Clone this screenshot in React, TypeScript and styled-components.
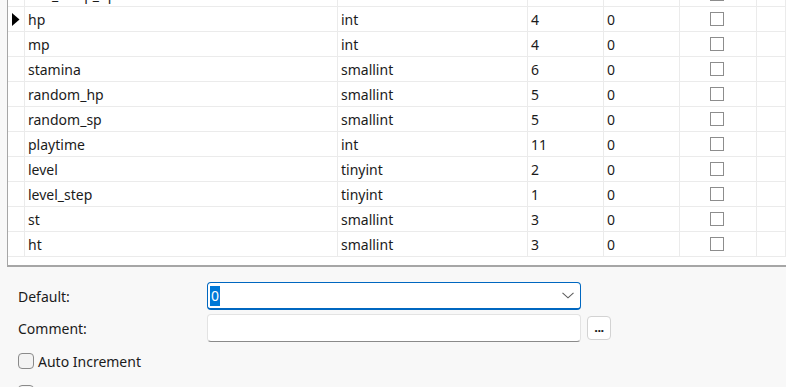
import styled, { createGlobalStyle } from "styled-components";

const GlobalStyle = createGlobalStyle`
	html, body {
		margin: 0;
		padding: 0;
		background: #f8f8f8;
	}
	body {
		font-family: "Noto Sans", "Open Sans", sans-serif;
		font-size: 14px;
		color: #1b1b1b;
	}
`

const Page = styled.div`
	width: 786px;
	height: 387px;
	overflow: hidden;
	background: #f8f8f8;
`

const GridPanel = styled.div`
	margin: -18px 0 0 7px;
	background: #ffffff;
	border-left: 1px solid #a6a6a6;
	border-bottom: 2px solid #a6a6a6;
	padding-bottom: 8px;
`

const Row = styled.div`
	display: grid;
	grid-template-columns: 17px 313px 190px 76px 76px 77px 1fr;
	height: 25px;
	box-sizing: border-box;
	border-bottom: 1px solid #ebebeb;
`

const Cell = styled.div<{ $center?: boolean }>`
	display: flex;
	align-items: center;
	justify-content: ${(p) => (p.$center ? "center" : "flex-start")};
	padding-left: ${(p) => (p.$center ? "0" : "3px")};
	border-right: 1px solid #ebebeb;
	white-space: nowrap;
	overflow: hidden;
	box-sizing: border-box;
`

const GridCheck = styled.span`
	width: 14px;
	height: 14px;
	box-sizing: border-box;
	border: 1px solid #8d8d8d;
	background: #ffffff;
	margin-left: -2px;
`

const FormArea = styled.div`
	padding: 15px 0 0 18px;
`

const FieldRow = styled.div`
	display: grid;
	grid-template-columns: 189px 374px auto;
	align-items: center;
	height: 28px;
	margin-bottom: 4px;
`

const Label = styled.span`
	color: #1b1b1b;
`

const Combo = styled.div`
	display: flex;
	align-items: center;
	justify-content: space-between;
	height: 28px;
	box-sizing: border-box;
	border: 1px solid #0067c0;
	border-bottom-width: 2px;
	border-radius: 4px;
	background: #ffffff;
	padding: 0 4px 0 2px;
`

const Selected = styled.span`
	background: #0078d7;
	color: #ffffff;
	padding: 0 1px;
	line-height: 20px;
`

const TextBox = styled.div`
	height: 28px;
	box-sizing: border-box;
	border: 1px solid #e3e3e3;
	border-bottom-color: #8a8a8a;
	border-radius: 4px;
	background: #ffffff;
`

const DotsButton = styled.button`
	margin-left: 6px;
	width: 24px;
	height: 24px;
	padding: 0 0 2px;
	box-sizing: border-box;
	border: 1px solid #d3d3d3;
	border-radius: 4px;
	background: #ffffff;
	font-family: "Noto Sans", sans-serif;
	font-size: 13px;
	font-weight: 700;
	line-height: 1;
	letter-spacing: -0.5px;
	color: #1b1b1b;
`

const CheckRow = styled.label<{ $first?: boolean }>`
	display: flex;
	align-items: center;
	gap: 4px;
	height: 16px;
	margin-top: ${(p) => (p.$first ? "11px" : "16px")};
`

const Box = styled.span`
	width: 16px;
	height: 16px;
	box-sizing: border-box;
	border: 1px solid #8a8a8a;
	border-radius: 4px;
	background: #f3f3f3;
`

type Column = {
	name: string;
	type: string;
	size: string;
	dec: string;
	current?: boolean;
}

const columns: Column[] = [
	{ name: "sub_temp_hp", type: "int", size: "4", dec: "0" },
	{ name: "hp", type: "int", size: "4", dec: "0", current: true },
	{ name: "mp", type: "int", size: "4", dec: "0" },
	{ name: "stamina", type: "smallint", size: "6", dec: "0" },
	{ name: "random_hp", type: "smallint", size: "5", dec: "0" },
	{ name: "random_sp", type: "smallint", size: "5", dec: "0" },
	{ name: "playtime", type: "int", size: "11", dec: "0" },
	{ name: "level", type: "tinyint", size: "2", dec: "0" },
	{ name: "level_step", type: "tinyint", size: "1", dec: "0" },
	{ name: "st", type: "smallint", size: "3", dec: "0" },
	{ name: "ht", type: "smallint", size: "3", dec: "0" },
]

function RowArrow() {
	return (
		<svg width="8" height="13" viewBox="0 0 8 13">
			<path d="M0 0 L7.5 6.5 L0 13 Z" fill="#000" />
		</svg>
	)
}

function Chevron() {
	return (
		<svg width="12" height="7" viewBox="0 0 12 7" style={{ marginRight: 2 }}>
			<path d="M0.5 0.8 L6 5.8 L11.5 0.8" fill="none" stroke="#5c5c5c" strokeWidth="1.1" />
		</svg>
	)
}

function App() {
	return (
		<Page>
			<GlobalStyle />
			<GridPanel>
				{columns.map((col, index) => (
					<Row key={index}>
						<Cell $center>{col.current ? <RowArrow /> : null}</Cell>
						<Cell>{col.name}</Cell>
						<Cell>{col.type}</Cell>
						<Cell>{col.size}</Cell>
						<Cell>{col.dec}</Cell>
						<Cell $center>
							<GridCheck />
						</Cell>
						<Cell />
					</Row>
				))}
			</GridPanel>

			<FormArea>
				<FieldRow>
					<Label>Default:</Label>
					<Combo>
						<Selected>0</Selected>
						<Chevron />
					</Combo>
				</FieldRow>
				<FieldRow>
					<Label>Comment:</Label>
					<TextBox />
					<DotsButton>...</DotsButton>
				</FieldRow>
				<CheckRow $first>
					<Box />
					<Label>Auto Increment</Label>
				</CheckRow>
				<CheckRow>
					<Box />
					<Label>Unsigned</Label>
				</CheckRow>
			</FormArea>
		</Page>
	)
}

export default App;
